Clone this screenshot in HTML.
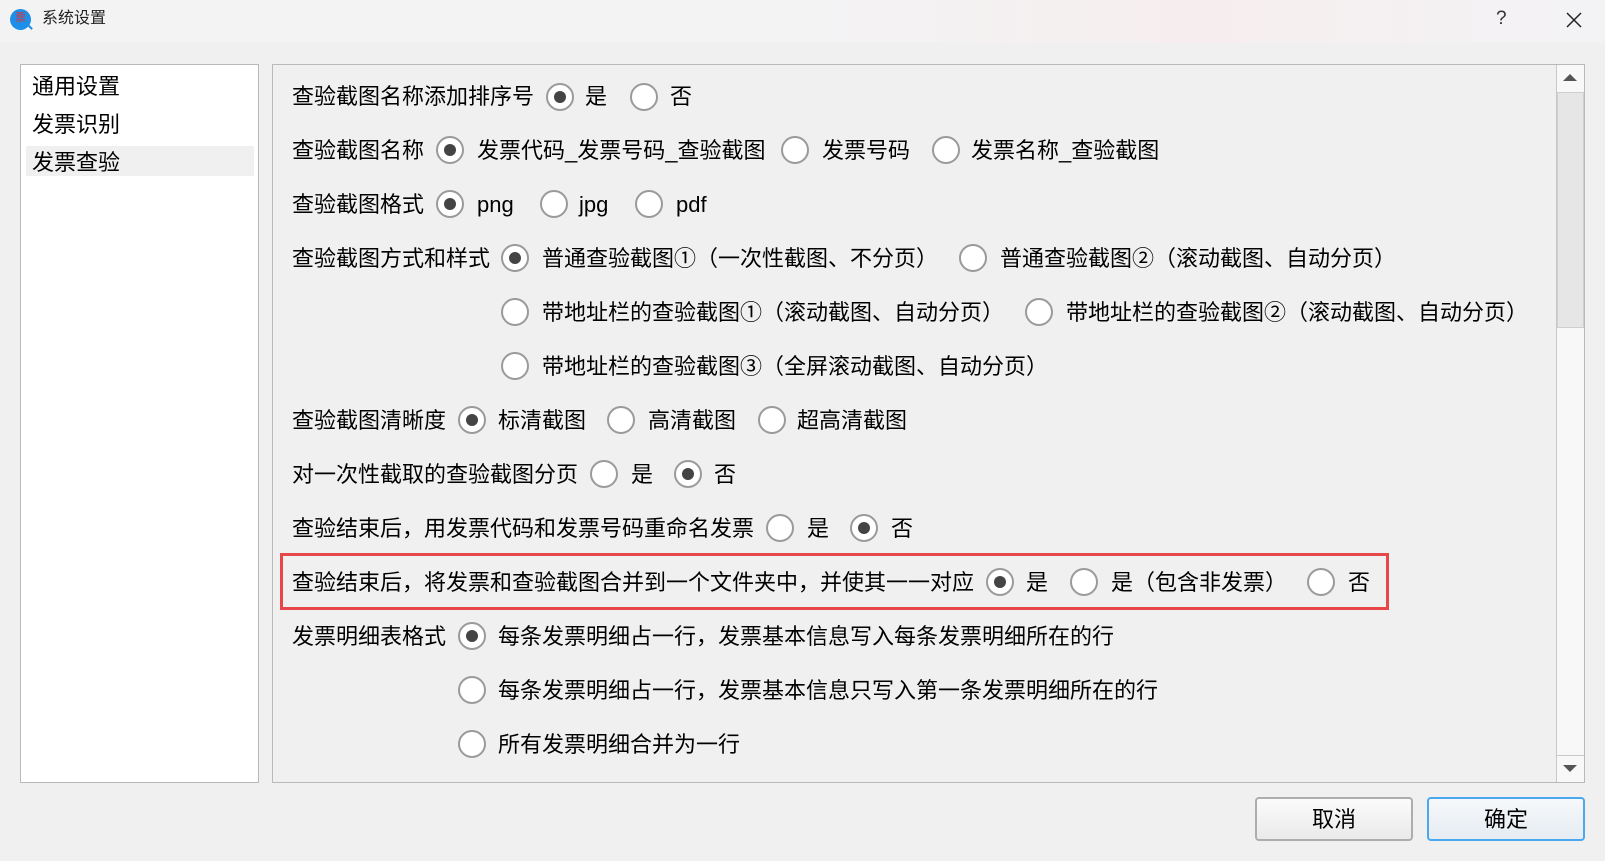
<!DOCTYPE html>
<html><head><meta charset="utf-8"><style>
*{margin:0;padding:0;box-sizing:border-box}
body{width:1605px;height:861px;background:#f0f0f0;font-family:"Liberation Sans","Noto Sans CJK SC",sans-serif;color:#000;position:relative;overflow:hidden}
.title{position:absolute;left:0;top:0;width:1605px;height:43px;background:linear-gradient(90deg,#f3f3f3 0%,#f3f3f4 50%,#f6eeee 75%,#f3f3f6 100%)}
.t{position:absolute;white-space:nowrap;font-size:22px;line-height:30px;transform:translateY(-14px)}
.r{position:absolute;width:28px;height:28px;border:2px solid #9a9a9a;border-radius:50%;background:#fff;transform:translate(-14px,-13px)}
.r.on::after{content:"";position:absolute;left:6px;top:6px;width:12px;height:12px;border-radius:50%;background:#444}
.btn{position:absolute;top:797px;height:44px;width:158px;border:2px solid #adadad;border-radius:4px;background:linear-gradient(#fbfbfb,#eaeaea);font-size:22px;text-align:center;line-height:42px}
</style></head><body>
<div class="title">
 <div style="position:absolute;left:10px;top:9px;width:21px;height:21px;border-radius:50%;background:#1e8fe8;"></div>
 <div style="position:absolute;left:27px;top:26px;width:6px;height:2px;background:#1e8fe8;transform:rotate(45deg)"></div>
 <div style="position:absolute;left:15px;top:11px;font-size:11px;line-height:14px;color:#d33">票</div>
 <div style="position:absolute;left:42px;top:8px;font-size:16px;line-height:22px;color:#222">系统设置</div>
 <div style="position:absolute;left:1496px;top:8px;font-size:19px;line-height:22px;color:#333">?</div>
 <svg style="position:absolute;left:1566px;top:12px" width="16" height="16"><path d="M1 1L15 15M15 1L1 15" stroke="#222" stroke-width="1.5"/></svg>
</div>
<div style="position:absolute;left:20px;top:64px;width:239px;height:719px;background:#fff;border:1px solid #b9b9b9"></div>
<div style="position:absolute;left:26px;top:146px;width:228px;height:30px;background:#f0f0f0"></div>
<div class="t" style="left:32px;top:86px">通用设置</div>
<div class="t" style="left:32px;top:124px">发票识别</div>
<div class="t" style="left:32px;top:162px">发票查验</div>
<div style="position:absolute;left:272px;top:64px;width:1313px;height:719px;border:1px solid #b9b9b9;background:#f0f0f0"></div>
<div style="position:absolute;left:1556px;top:65px;width:28px;height:717px;background:#f8f8f8;border-left:1px solid #c8c8c8"></div>
<div style="position:absolute;left:1557px;top:92px;width:27px;height:236px;background:#e6e6e6;border:1px solid #cfcfcf"></div>
<svg style="position:absolute;left:1562px;top:72px" width="16" height="10"><path d="M1 9L8 2L15 9Z" fill="#555"/></svg>
<svg style="position:absolute;left:1562px;top:764px" width="16" height="10"><path d="M1 1L8 8L15 1Z" fill="#555"/></svg>
<div style="position:absolute;left:1557px;top:755px;width:27px;height:1px;background:#c8c8c8"></div>
<div style="position:absolute;left:280px;top:553px;width:1109px;height:57px;border:3px solid #e8474a"></div>

<div class="t" style="left:292px;top:96px">查验截图名称添加排序号</div>
<div class="r on" style="left:560px;top:96px"></div><div class="t" style="left:585px;top:96px">是</div>
<div class="r" style="left:644px;top:96px"></div><div class="t" style="left:670px;top:96px">否</div>

<div class="t" style="left:292px;top:150px">查验截图名称</div>
<div class="r on" style="left:450px;top:149px"></div><div class="t" style="left:477px;top:150px">发票代码_发票号码_查验截图</div>
<div class="r" style="left:795px;top:149px"></div><div class="t" style="left:822px;top:150px">发票号码</div>
<div class="r" style="left:946px;top:149px"></div><div class="t" style="left:971px;top:150px">发票名称_查验截图</div>

<div class="t" style="left:292px;top:204px">查验截图格式</div>
<div class="r on" style="left:450px;top:203px"></div><div class="t" style="left:477px;top:204px">png</div>
<div class="r" style="left:554px;top:203px"></div><div class="t" style="left:579px;top:204px">jpg</div>
<div class="r" style="left:649px;top:203px"></div><div class="t" style="left:676px;top:204px">pdf</div>

<div class="t" style="left:292px;top:258px">查验截图方式和样式</div>
<div class="r on" style="left:515px;top:257px"></div><div class="t" style="left:542px;top:258px">普通查验截图①（一次性截图、不分页）</div>
<div class="r" style="left:973px;top:257px"></div><div class="t" style="left:1000px;top:258px">普通查验截图②（滚动截图、自动分页）</div>
<div class="r" style="left:515px;top:311px"></div><div class="t" style="left:542px;top:312px">带地址栏的查验截图①（滚动截图、自动分页）</div>
<div class="r" style="left:1039px;top:311px"></div><div class="t" style="left:1066px;top:312px">带地址栏的查验截图②（滚动截图、自动分页）</div>
<div class="r" style="left:515px;top:365px"></div><div class="t" style="left:542px;top:366px">带地址栏的查验截图③（全屏滚动截图、自动分页）</div>

<div class="t" style="left:292px;top:420px">查验截图清晰度</div>
<div class="r on" style="left:472px;top:419px"></div><div class="t" style="left:498px;top:420px">标清截图</div>
<div class="r" style="left:621px;top:419px"></div><div class="t" style="left:648px;top:420px">高清截图</div>
<div class="r" style="left:772px;top:419px"></div><div class="t" style="left:797px;top:420px">超高清截图</div>

<div class="t" style="left:292px;top:474px">对一次性截取的查验截图分页</div>
<div class="r" style="left:604px;top:473px"></div><div class="t" style="left:631px;top:474px">是</div>
<div class="r on" style="left:688px;top:473px"></div><div class="t" style="left:714px;top:474px">否</div>

<div class="t" style="left:292px;top:528px">查验结束后，用发票代码和发票号码重命名发票</div>
<div class="r" style="left:780px;top:527px"></div><div class="t" style="left:807px;top:528px">是</div>
<div class="r on" style="left:864px;top:527px"></div><div class="t" style="left:891px;top:528px">否</div>

<div class="t" style="left:292px;top:582px">查验结束后，将发票和查验截图合并到一个文件夹中，并使其一一对应</div>
<div class="r on" style="left:1000px;top:581px"></div><div class="t" style="left:1026px;top:582px">是</div>
<div class="r" style="left:1084px;top:581px"></div><div class="t" style="left:1111px;top:582px">是（包含非发票）</div>
<div class="r" style="left:1321px;top:581px"></div><div class="t" style="left:1348px;top:582px">否</div>

<div class="t" style="left:292px;top:636px">发票明细表格式</div>
<div class="r on" style="left:472px;top:635px"></div><div class="t" style="left:498px;top:636px">每条发票明细占一行，发票基本信息写入每条发票明细所在的行</div>
<div class="r" style="left:472px;top:689px"></div><div class="t" style="left:498px;top:690px">每条发票明细占一行，发票基本信息只写入第一条发票明细所在的行</div>
<div class="r" style="left:472px;top:743px"></div><div class="t" style="left:498px;top:744px">所有发票明细合并为一行</div>

<div class="btn" style="left:1255px">取消</div>
<div class="btn" style="left:1427px;border-color:#4aa8f0;background:linear-gradient(#f6f8fa,#e6ecf2)">确定</div>
</body></html>
